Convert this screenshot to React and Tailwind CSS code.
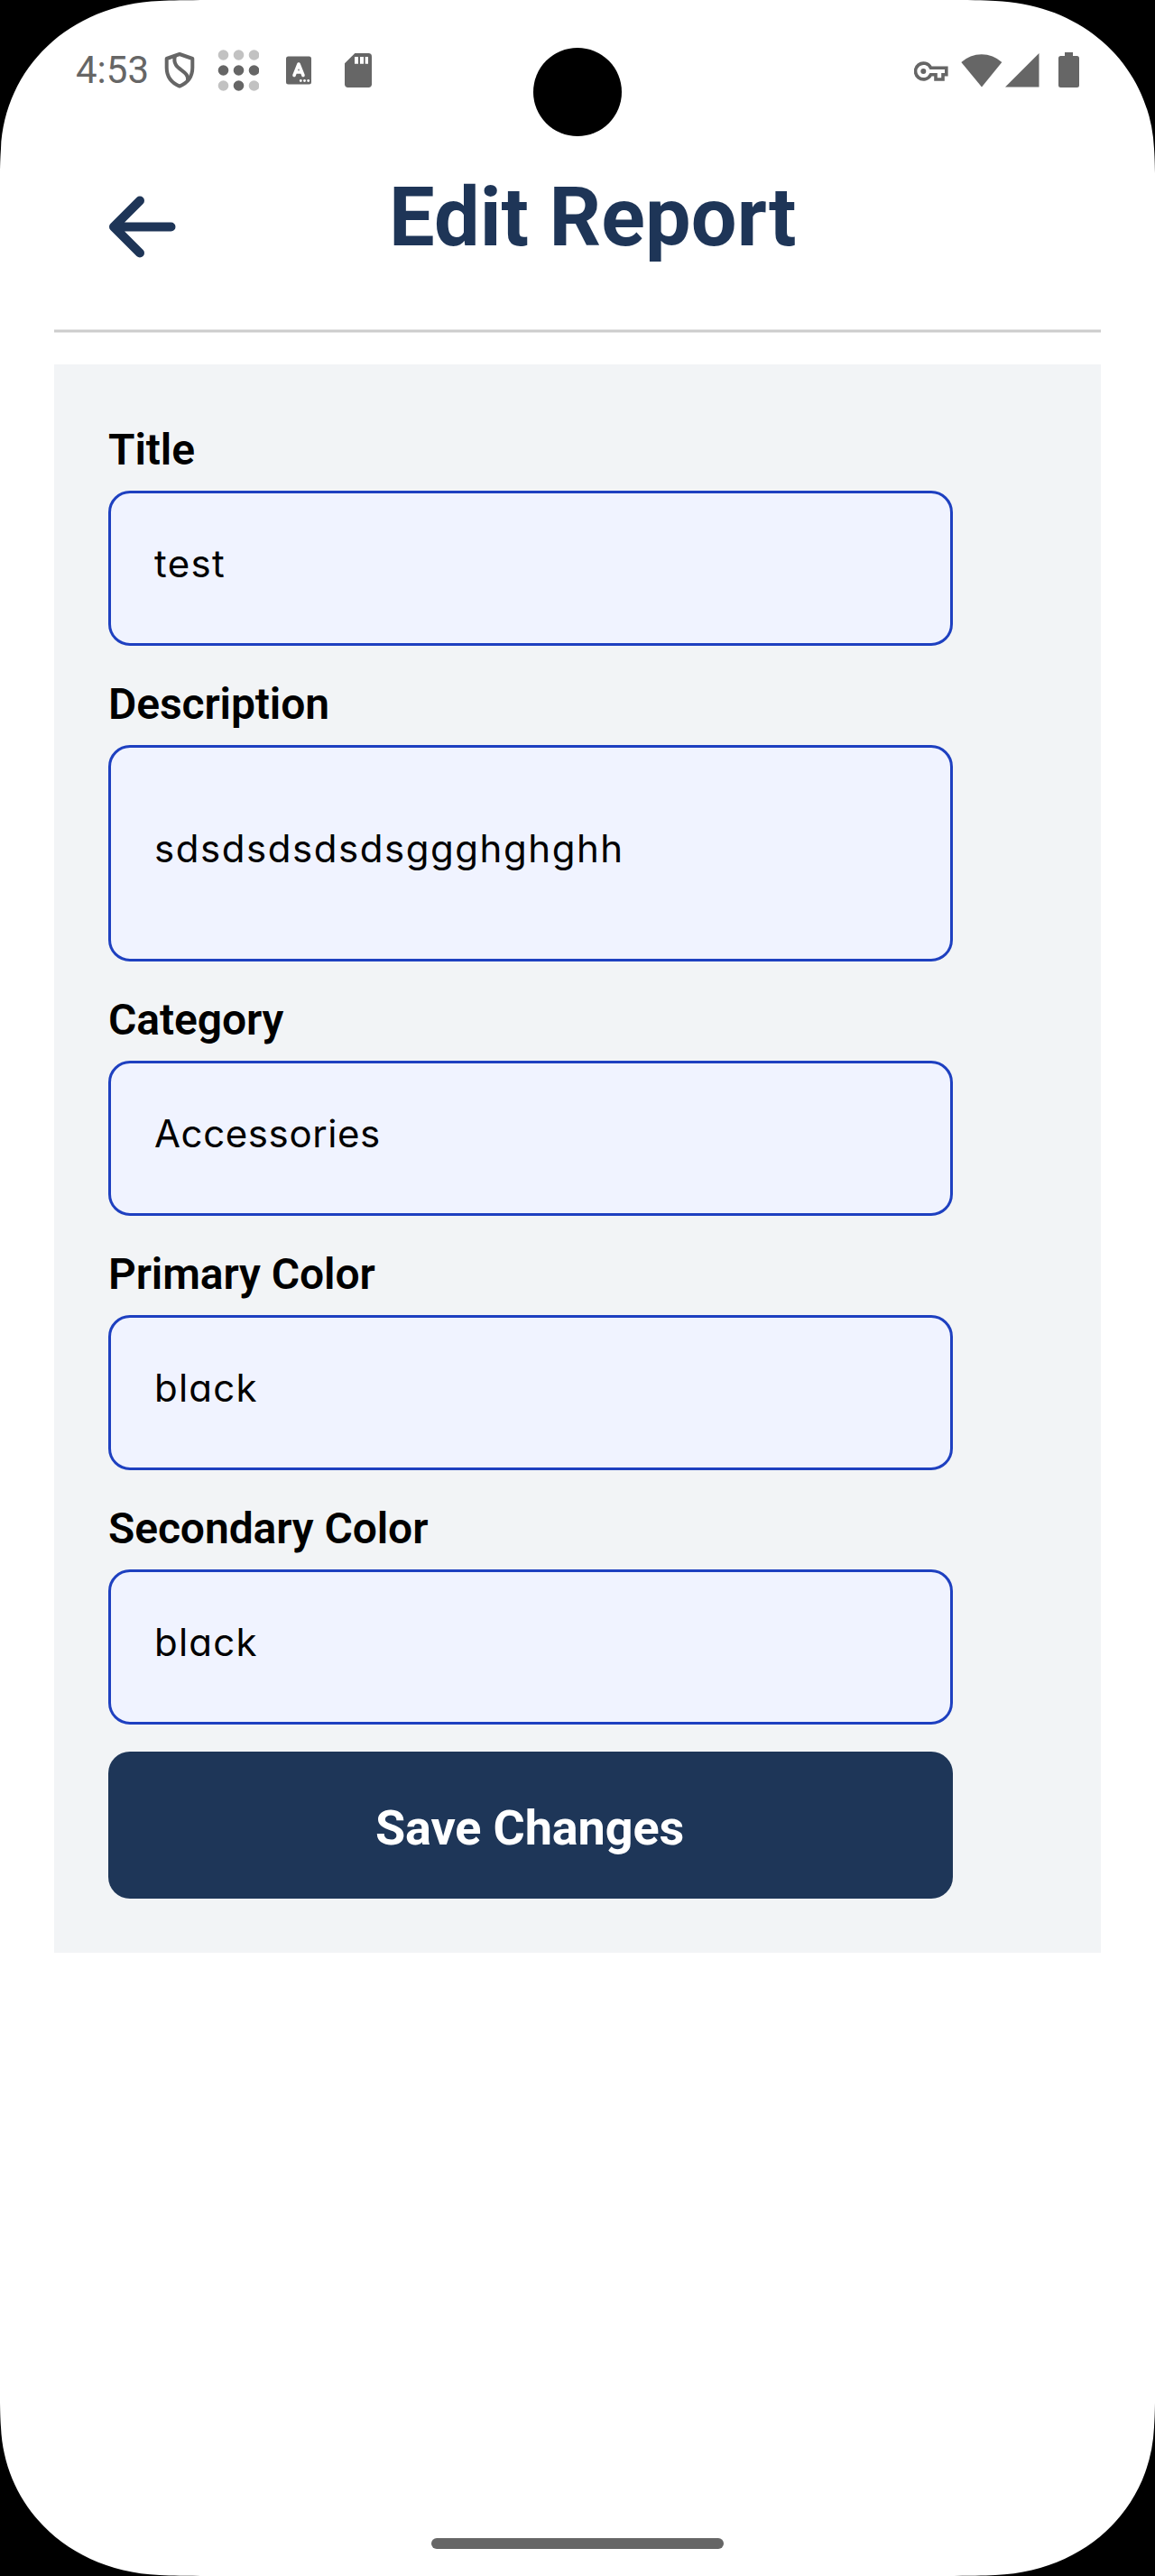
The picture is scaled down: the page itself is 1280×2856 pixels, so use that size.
import React from "react";

const GRAY = "#666666";

function ShieldIcon() {
  return (
    <svg className="ml-[16px] h-[42px] w-[36px] shrink-0" viewBox="0 0 36 42" fill="none" stroke={GRAY} strokeWidth="4">
      <path d="M18 3 L32.3 8 V18 C32.3 28 26.5 35 18 38.6 C9.500 35 3.700 28 3.700 18 V8 Z" strokeLinejoin="round" />
      <path d="M13 5 C8.500 21 29 20 27 32" />
    </svg>
  );
}

function DotsIcon() {
  const dark = [3, 4, 5, 7];
  return (
    <svg className="ml-[24px] h-[46px] w-[46px] shrink-0" viewBox="0 0 46 46">
      {[0, 1, 2, 3, 4, 5, 6, 7, 8].map((i) => (
        <circle key={i} cx={6.5 + (i % 3) * 17} cy={6 + Math.floor(i / 3) * 17} r="5.8" fill={dark.includes(i) ? GRAY : "#c2c2c2"} />
      ))}
    </svg>
  );
}

function KeyboardIcon() {
  return (
    <svg className="ml-[30px] h-[32px] w-[28px] shrink-0" viewBox="0 0 28 32">
      <rect width="28" height="31" y="0.5" rx="2.500" fill={GRAY} />
      <path d="M9 21.500 L14 9 L19 21.500 M10.500 18 H17.500" fill="none" stroke="#fff" strokeWidth="3.600" strokeLinecap="round" strokeLinejoin="round" />
      <g fill="#fff">
        <circle cx="16.300" cy="27.500" r="1.400" />
        <circle cx="20.500" cy="27.500" r="1.400" />
        <circle cx="24.700" cy="27.500" r="1.400" />
      </g>
    </svg>
  );
}

function SdCardIcon() {
  return (
    <svg className="ml-[37px] h-[38px] w-[30px] shrink-0" viewBox="0 0 30 38">
      <path d="M11.300 0 H26.300 Q30 0 30 3.700 V34.300 Q30 38 26.300 38 H3.700 Q0 38 0 34.300 V11.300 Z" fill={GRAY} />
      <path d="M11 4 H15 V11.700 H11 Z M17 4 H21 V11.700 H17 Z M22.700 4 H26 V11.700 H22.700 Z" fill="#fff" />
    </svg>
  );
}

function KeyIcon() {
  return (
    <svg className="mt-[4px] h-[24px] w-[38px] shrink-0" viewBox="0 0 38 24">
      <path
        d="M18.500 7.200 A8.900 8.900 0 1 0 18.500 14.800 H24 V20 H32 V14.800 H35.800 V7.200 Z"
        fill="none"
        stroke={GRAY}
        strokeWidth="3.600"
      />
      <circle cx="10.300" cy="11" r="3" fill={GRAY} />
    </svg>
  );
}

function WifiIcon() {
  return (
    <svg className="ml-[14px] h-[38px] w-[46px] shrink-0" viewBox="0 0 46 38">
      <path d="M23 37.500 L0.300 10 A33 33 0 0 1 45.300 10 Z" fill={GRAY} />
    </svg>
  );
}

function SignalIcon() {
  return (
    <svg className="ml-[3px] h-[38px] w-[38px] shrink-0" viewBox="0 0 38 38">
      <path d="M0 37.500 L37.500 0 V37.500 Z" fill={GRAY} />
    </svg>
  );
}

function BatteryIcon() {
  return (
    <svg className="ml-[21px] h-[39px] w-[23px] shrink-0" viewBox="0 0 23 39">
      <path d="M7 0 H16 V4 H20.500 Q23 4 23 6.500 V36.500 Q23 39 20.500 39 H2.500 Q0 39 0 36.500 V6.500 Q0 4 2.500 4 H7 Z" fill={GRAY} />
    </svg>
  );
}

function Corner({ className }) {
  return (
    <svg className={"pointer-events-none absolute h-[232px] w-[232px] " + className} viewBox="0 0 232 232">
      <path d="M0 0 H232 C205 0.300 190 0.300 177 1 C76 5 5 76 1 165 C0.500 172 0.200 180 0 192 Z" fill="#000" />
    </svg>
  );
}

function Field({ label, value, height, spacing, first }) {
  return (
    <div className={first ? "" : "mt-[30px]"}>
      <div className="h-[80px] pt-[7px] text-[48px] font-semibold leading-[56px] tracking-[-0.1px] text-black">{label}</div>
      <div className={"flex w-[936px] items-center rounded-[24px] border-[3px] border-[#1e40c0] bg-[#f0f3ff] pb-[10px] pl-[48px] " + height}>
        <span className={"font-['Inter'] text-[42px] leading-[60px] text-black [font-feature-settings:'cv11'] " + spacing}>{value}</span>
      </div>
    </div>
  );
}

export default function App() {
  return (
    <div className="relative flex h-[2856px] w-[1280px] flex-col overflow-hidden bg-white font-['Roboto']">
      <div className="flex h-[155px] items-center justify-between pl-[84px] pr-[84px]">
        <div className="flex items-center">
          <span className="w-[81px] whitespace-nowrap text-[42px] leading-[48px] text-[#666666]">4:53</span>
          <ShieldIcon />
          <DotsIcon />
          <KeyboardIcon />
          <SdCardIcon />
        </div>
        <div className="flex items-center">
          <KeyIcon />
          <WifiIcon />
          <SignalIcon />
          <BatteryIcon />
        </div>
      </div>

      <header className="mx-[60px] flex h-[210px] items-start">
        <svg className="ml-[60px] mt-[61px] h-[72px] w-[76px] shrink-0" viewBox="0 0 76 72" fill="none" stroke="#1e3557" strokeWidth="10" strokeLinecap="round" strokeLinejoin="round">
          <path d="M35 6.500 L6 35.500 L35 64.500 M6 35.500 H69.500" />
        </svg>
        <h1 className="ml-[235px] mt-[34px] whitespace-nowrap text-[90px] font-bold leading-[106px] tracking-[0.1px] text-[#1e3557]">Edit Report</h1>
      </header>
      <div className="mx-[60px] h-[4px] border-y border-[#e4e4e4] bg-[#cccccc]" />

      <main className="mx-[60px] mt-[35px] h-[1761px] bg-[#f2f4f6] p-[60px]">
        <Field first label="Title" value="test" height="h-[172px]" spacing="tracking-[1.3px]" />
        <Field label="Description" value="sdsdsdsdsdsggghghghh" height="h-[240px]" spacing="tracking-[1.55px]" />
        <Field label="Category" value="Accessories" height="h-[172px]" spacing="tracking-[0.6px]" />
        <Field label="Primary Color" value="black" height="h-[172px]" spacing="tracking-[1.2px]" />
        <Field label="Secondary Color" value="black" height="h-[172px]" spacing="tracking-[1.2px]" />
        <button className="mt-[30px] flex h-[163px] w-[936px] items-center justify-center rounded-[24px] bg-[#1e3658] pr-[2px] pt-[7px] text-[54px] font-bold leading-[64px] tracking-[-0.15px] text-white">
          Save Changes
        </button>
      </main>

      <div className="mx-auto mb-[30px] mt-auto h-[12px] w-[324px] rounded-full bg-[#666666]" />

      <div className="absolute left-[591px] top-[53px] h-[98px] w-[98px] rounded-full bg-black" />
      <Corner className="left-0 top-0" />
      <Corner className="right-0 top-0 -scale-x-100" />
      <Corner className="bottom-0 left-0 -scale-y-100" />
      <Corner className="bottom-0 right-0 -scale-100" />
    </div>
  );
}
